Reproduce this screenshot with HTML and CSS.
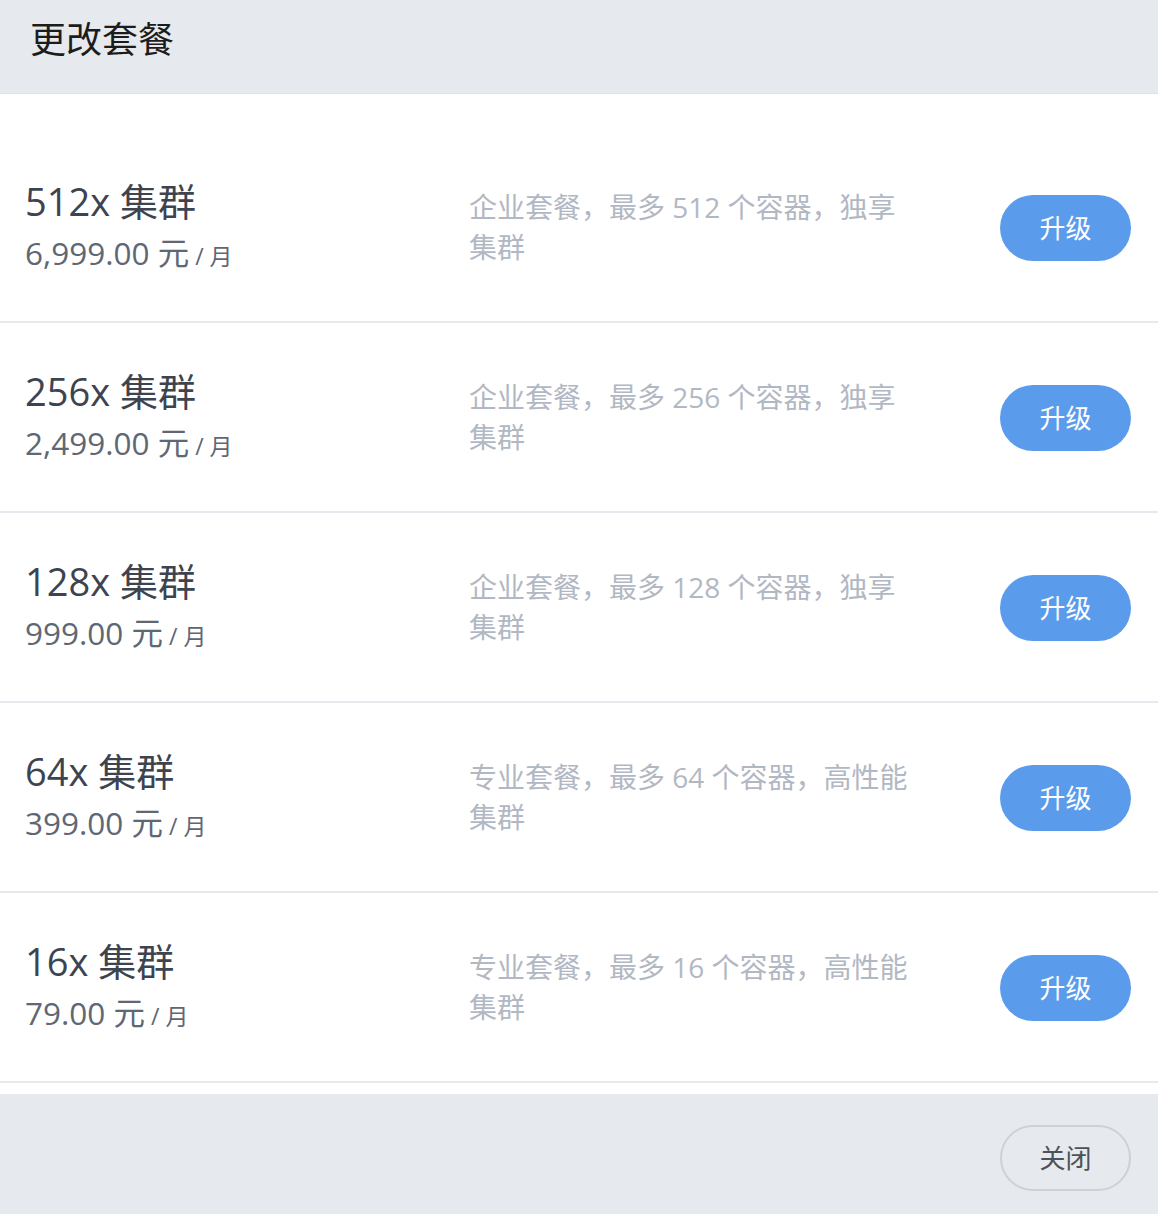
FILE: index.html
```html
<!DOCTYPE html>
<html lang="zh-CN">
<head>
<meta charset="utf-8">
<title>更改套餐</title>
<link rel="stylesheet" href="styles.css">
</head>
<body>
<div class="modal">
  <div class="modal-header">
    <h1 class="modal-title">更改套餐</h1>
  </div>
  <div class="plan-list">
    <div class="plan">
      <div class="plan-info">
        <div class="plan-name">512x 集群</div>
        <div class="plan-price">6,999.00 元<span class="per"> / 月</span></div>
      </div>
      <div class="plan-desc">企业套餐，最多 512 个容器，独享集群</div>
      <button class="btn-upgrade">升级</button>
    </div>
    <div class="plan">
      <div class="plan-info">
        <div class="plan-name">256x 集群</div>
        <div class="plan-price">2,499.00 元<span class="per"> / 月</span></div>
      </div>
      <div class="plan-desc">企业套餐，最多 256 个容器，独享集群</div>
      <button class="btn-upgrade">升级</button>
    </div>
    <div class="plan">
      <div class="plan-info">
        <div class="plan-name">128x 集群</div>
        <div class="plan-price">999.00 元<span class="per"> / 月</span></div>
      </div>
      <div class="plan-desc">企业套餐，最多 128 个容器，独享集群</div>
      <button class="btn-upgrade">升级</button>
    </div>
    <div class="plan">
      <div class="plan-info">
        <div class="plan-name">64x 集群</div>
        <div class="plan-price">399.00 元<span class="per"> / 月</span></div>
      </div>
      <div class="plan-desc">专业套餐，最多 64 个容器，高性能集群</div>
      <button class="btn-upgrade">升级</button>
    </div>
    <div class="plan">
      <div class="plan-info">
        <div class="plan-name">16x 集群</div>
        <div class="plan-price">79.00 元<span class="per"> / 月</span></div>
      </div>
      <div class="plan-desc">专业套餐，最多 16 个容器，高性能集群</div>
      <button class="btn-upgrade">升级</button>
    </div>
  </div>
  <div class="modal-footer">
    <button class="btn-close">关闭</button>
  </div>
</div>
</body>
</html>
```

FILE: styles.css
```css
html, body {
  margin: 0;
  padding: 0;
  background: #ffffff;
}
body {
  font-family: "Open Sans", "Noto Sans CJK SC", sans-serif;
}
.modal {
  width: 1158px;
  display: flex;
  flex-direction: column;
}
.modal-header {
  background: #e6e9ed;
  border-bottom: 1px solid #dfe2e6;
  box-sizing: border-box;
  height: 94px;
  padding: 0 30px;
  display: flex;
  align-items: flex-start;
}
.modal-title {
  margin: 0;
  padding-top: 12px;
  font-family: "Noto Sans CJK SC", sans-serif;
  font-weight: 400;
  font-size: 36px;
  line-height: 50px;
  color: #1c1c1c;
}
.plan-list {
  padding: 39px 0 11px;
}
.plan {
  height: 190px;
  box-sizing: border-box;
  border-bottom: 2px solid #e6e9ed;
  display: flex;
  align-items: center;
  padding: 0 27px 0 25px;
}
.plan-info {
  width: 444px;
  flex: none;
}
.plan-name {
  font-size: 38px;
  line-height: 50px;
  color: #3d4450;
}
.plan-price {
  font-size: 31.5px;
  line-height: 46px;
  color: #5f6775;
  margin-top: 4px;
}
.per {
  font-size: 23px;
}
.plan-desc {
  width: 446px;
  flex: none;
  font-size: 28px;
  line-height: 40px;
  color: #b1b8c3;
}
.btn-upgrade {
  margin-left: auto;
  margin-top: 2px;
  width: 131px;
  height: 66px;
  border: none;
  border-radius: 33px;
  background: #5b9bec;
  color: #ffffff;
  font-family: "Noto Sans CJK SC", sans-serif;
  font-size: 26px;
  line-height: 30px;
  padding: 0 0 3px;
  cursor: pointer;
}
.modal-footer {
  background: #e6e9ed;
  height: 120px;
  box-sizing: border-box;
  padding: 31px 27px 0;
  display: flex;
  justify-content: flex-end;
  align-items: flex-start;
}
.btn-close {
  width: 131px;
  height: 66px;
  border: 2px solid #cdd1d7;
  border-radius: 33px;
  background: transparent;
  color: #4c525a;
  font-family: "Noto Sans CJK SC", sans-serif;
  font-size: 26px;
  line-height: 30px;
  padding: 0 0 3px;
}
```
